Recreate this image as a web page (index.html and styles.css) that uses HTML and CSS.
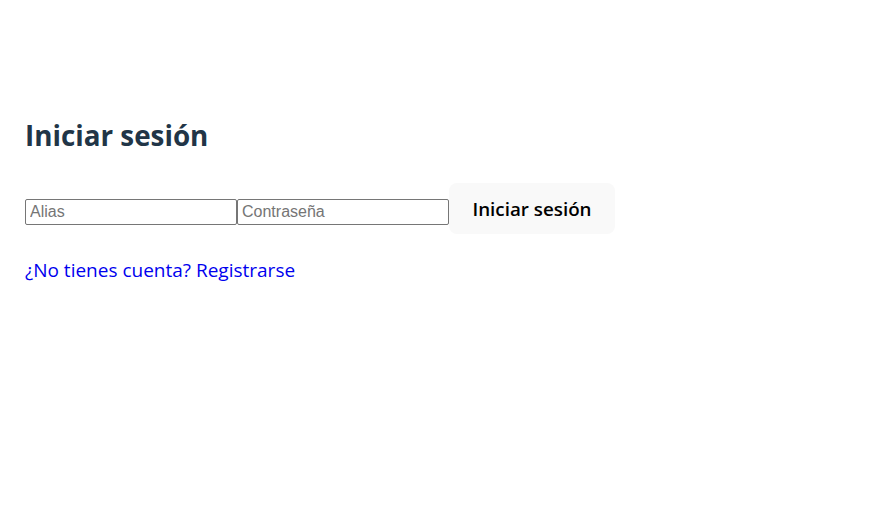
FILE: index.html
```html
<!DOCTYPE html>
<html lang="es">
<head>
<meta charset="utf-8">
<title>Iniciar sesión</title>
<link rel="stylesheet" href="styles.css">
</head>
<body>
<main class="page">
  <h1 class="title">Iniciar sesión</h1>
  <form class="login-form">
    <input class="field" type="text" placeholder="Alias">
    <input class="field" type="password" placeholder="Contraseña">
    <button class="submit" type="submit">Iniciar sesión</button>
  </form>
  <p class="register"><a class="register-link" href="#">¿No tienes cuenta? Registrarse</a></p>
</main>
</body>
</html>
```

FILE: styles.css
```css
html, body {
  margin: 0;
  padding: 0;
  background: #ffffff;
}

.page {
  padding: 112px 25px 0;
  font-family: "Open Sans", "Noto Sans", sans-serif;
  color: #213547;
}

.title {
  margin: 0;
  font-size: 27.8px;
  line-height: 46px;
  font-weight: 700;
  color: #213547;
}

.login-form {
  display: flex;
  align-items: center;
  margin-top: 25px;
}

.field {
  box-sizing: border-box;
  width: 212px;
  height: 26px;
  margin: 7px 0 0;
  padding: 1px 4px;
  border: 1px solid #767676;
  border-radius: 2px;
  font-family: "Liberation Sans", Arial, sans-serif;
  font-size: 16px;
  color: #000;
  background: #fff;
}

.field::placeholder {
  color: #757575;
}

.submit {
  box-sizing: border-box;
  height: 51px;
  width: 166px;
  margin: 0;
  padding: 0 10px;
  border: 1px solid transparent;
  border-radius: 8px;
  background: #f9f9f9;
  font-family: "Open Sans", "Noto Sans", sans-serif;
  font-size: 18.8px;
  font-weight: 600;
  color: #000;
  cursor: pointer;
}

.register {
  margin: 24px 0 0;
  font-size: 19px;
  line-height: 24px;
}

.register-link {
  color: #0000ee;
  text-decoration: none;
}
```
